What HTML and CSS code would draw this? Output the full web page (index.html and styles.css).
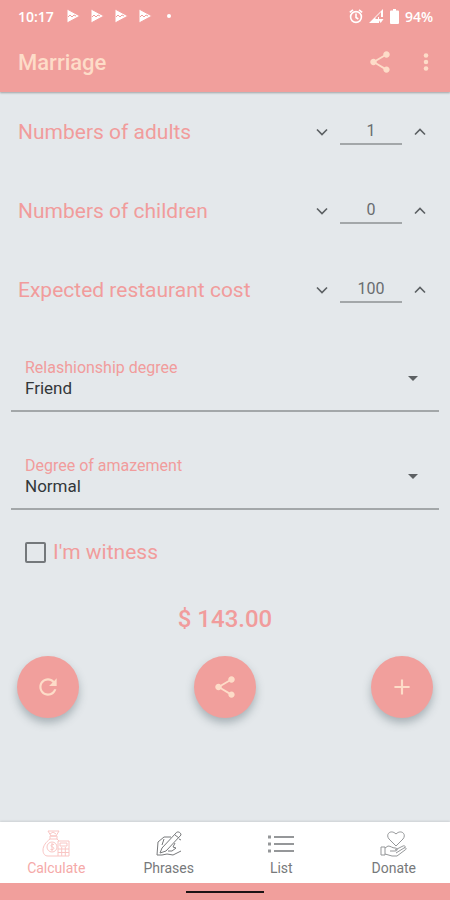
FILE: index.html
```
<!DOCTYPE html>
<html lang="en">

<head>
    <meta charset="UTF-8">
    <meta name="viewport" content="width=device-width, initial-scale=1.0">
    <title>Marriage</title>
    <link rel="stylesheet" href="styles.css">
</head>

<body>
    <header class="app-header">
        <div class="status-bar">
            <span class="clock">10:17</span>
            <div class="notifications">
                <svg class="play-icon" viewBox="0 0 14 14"><path d="M1 0l13 7-13 7z" fill="#fff" /><path d="M2 8l2-2 2 2 2-2 2 1" /></svg>
                <svg class="play-icon" viewBox="0 0 14 14"><path d="M1 0l13 7-13 7z" fill="#fff" /><path d="M2 8l2-2 2 2 2-2 2 1" /></svg>
                <svg class="play-icon" viewBox="0 0 14 14"><path d="M1 0l13 7-13 7z" fill="#fff" /><path d="M2 8l2-2 2 2 2-2 2 1" /></svg>
                <svg class="play-icon" viewBox="0 0 14 14"><path d="M1 0l13 7-13 7z" fill="#fff" /><path d="M2 8l2-2 2 2 2-2 2 1" /></svg>
                <span class="more-dot"></span>
            </div>
            <div class="system-icons">
                <svg width="14" height="15" viewBox="0 0 14 15" fill="none" stroke="#fff" stroke-width="1.6">
                    <circle cx="7" cy="8" r="5.4" />
                    <path d="M7 4.500v4l2.300 1.500M.8 3.300L4 .8M13.200 3.300L10 .8" />
                </svg>
                <svg width="15" height="15" viewBox="0 0 15 15">
                    <path d="M0 14L14 0v8h-4v6z" fill="#fff" />
                    <path d="M6.500 10V8.500L12 3v5H9v2z" fill="#f19f9c" />
                    <path d="M9 10h5.500L11.700 14z" fill="#fff" />
                </svg>
                <svg width="9" height="15" viewBox="0 0 9 15">
                    <path d="M3 0h3v1.500h2a1 1 0 0 1 1 1V14a1 1 0 0 1-1 1H1a1 1 0 0 1-1-1V2.500a1 1 0 0 1 1-1h2z" fill="#fff" />
                </svg>
                <span class="battery-level">94%</span>
            </div>
        </div>
        <div class="toolbar">
            <h1>Marriage</h1>
            <button class="icon-button" type="button" aria-label="Share">
                <svg width="26" height="26" viewBox="0 0 24 24" fill="currentColor">
                    <path d="M18 16.080c-.76 0-1.440.3-1.960.77L8.910 12.700c.05-.23.09-.46.09-.7s-.04-.47-.09-.7l7.050-4.110c.54.5 1.250.81 2.040.81 1.660 0 3-1.340 3-3s-1.340-3-3-3-3 1.340-3 3c0 .24.04.47.09.7L8.040 9.810C7.500 9.310 6.790 9 6 9c-1.660 0-3 1.340-3 3s1.340 3 3 3c.79 0 1.500-.31 2.040-.81l7.120 4.160c-.05.21-.08.43-.08.65 0 1.610 1.310 2.920 2.920 2.920s2.920-1.310 2.920-2.920-1.310-2.920-2.920-2.920z" />
                </svg>
            </button>
            <button class="icon-button" type="button" aria-label="More options">
                <svg width="26" height="26" viewBox="0 0 24 24" fill="currentColor">
                    <circle cx="12" cy="6" r="2.100" />
                    <circle cx="12" cy="12" r="2.100" />
                    <circle cx="12" cy="18" r="2.100" />
                </svg>
            </button>
        </div>
    </header>

    <main class="content">
        <div class="number-row">
            <label for="adults">Numbers of adults</label>
            <div class="stepper">
                <button type="button" aria-label="Fewer adults"><svg viewBox="0 0 24 24"><path d="M6 9l6 6 6-6" /></svg></button>
                <input type="text" inputmode="numeric" id="adults" value="1">
                <button type="button" aria-label="More adults"><svg viewBox="0 0 24 24"><path d="M6 15l6-6 6 6" /></svg></button>
            </div>
        </div>
        <div class="number-row">
            <label for="children">Numbers of children</label>
            <div class="stepper">
                <button type="button" aria-label="Fewer children"><svg viewBox="0 0 24 24"><path d="M6 9l6 6 6-6" /></svg></button>
                <input type="text" inputmode="numeric" id="children" value="0">
                <button type="button" aria-label="More children"><svg viewBox="0 0 24 24"><path d="M6 15l6-6 6 6" /></svg></button>
            </div>
        </div>
        <div class="number-row">
            <label for="cost">Expected restaurant cost</label>
            <div class="stepper">
                <button type="button" aria-label="Lower cost"><svg viewBox="0 0 24 24"><path d="M6 9l6 6 6-6" /></svg></button>
                <input type="text" inputmode="numeric" id="cost" value="100">
                <button type="button" aria-label="Higher cost"><svg viewBox="0 0 24 24"><path d="M6 15l6-6 6 6" /></svg></button>
            </div>
        </div>

        <div class="select-list">
            <div class="select-field">
                <label for="relationship">Relashionship degree</label>
                <select id="relationship">
                    <option>Friend</option>
                </select>
                <svg class="select-arrow" width="10" height="5" viewBox="0 0 10 5"><path d="M0 0h10L5 5z" fill="#5c6063" /></svg>
            </div>
            <div class="select-field">
                <label for="amazement">Degree of amazement</label>
                <select id="amazement">
                    <option>Normal</option>
                </select>
                <svg class="select-arrow" width="10" height="5" viewBox="0 0 10 5"><path d="M0 0h10L5 5z" fill="#5c6063" /></svg>
            </div>
        </div>

        <label class="witness">
            <input type="checkbox">
            I'm witness
        </label>

        <p class="total">$ 143.00</p>

        <div class="actions">
            <button class="fab" type="button" aria-label="Reset">
                <svg width="26" height="26" viewBox="0 0 24 24" fill="currentColor">
                    <path d="M17.650 6.350C16.200 4.900 14.210 4 12 4c-4.420 0-7.990 3.580-7.990 8s3.570 8 7.990 8c3.730 0 6.840-2.550 7.730-6h-2.080c-.82 2.330-3.040 4-5.650 4-3.310 0-6-2.690-6-6s2.690-6 6-6c1.660 0 3.140.69 4.220 1.780L13 11h7V4l-2.350 2.350z" />
                </svg>
            </button>
            <button class="fab" type="button" aria-label="Share result">
                <svg width="26" height="26" viewBox="0 0 24 24" fill="currentColor">
                    <path d="M18 16.080c-.76 0-1.440.3-1.960.77L8.910 12.700c.05-.23.09-.46.09-.7s-.04-.47-.09-.7l7.050-4.110c.54.5 1.250.81 2.040.81 1.660 0 3-1.340 3-3s-1.340-3-3-3-3 1.340-3 3c0 .24.04.47.09.7L8.040 9.810C7.500 9.310 6.790 9 6 9c-1.660 0-3 1.340-3 3s1.340 3 3 3c.79 0 1.500-.31 2.040-.81l7.120 4.160c-.05.21-.08.43-.08.65 0 1.610 1.310 2.920 2.920 2.920s2.920-1.310 2.920-2.920-1.310-2.920-2.920-2.920z" />
                </svg>
            </button>
            <button class="fab" type="button" aria-label="Add">
                <svg width="26" height="26" viewBox="0 0 24 24" fill="currentColor">
                    <path d="M19 13h-6v6h-2v-6H5v-2h6V5h2v6h6v2z" />
                </svg>
            </button>
        </div>
    </main>

    <nav class="bottom-nav">
        <a class="active" href="#calculate">
            <svg viewBox="0 0 28 28">
                <path d="M6 1h11l-3 5H9zM8 6h7v3H8zM8 9C4 12 1 16 1 20c0 4 2 6 5 6h10M15 9l2 2M8 4l3-2 3 2" />
                <circle cx="10" cy="17" r="5" />
                <path d="M12 14.500c-3-1-4 2-1.500 2.500s1.500 3.500-2 2.500M10 13v8M16 11h11v15H16zM18 13h7v3h-7zM16 19h11M16 22.500h11M19.700 17v9M23.300 17v9" />
            </svg>
            Calculate
        </a>
        <a href="#phrases">
            <svg class="pen-icon" viewBox="0 0 28 28">
                <path d="M7 18L21 3c1-2 5-1 5 2L11 21l-6 2zM20 5l4 3" />
                <path d="M16 7H9l-6 5-1 13h5l5-1 6 1 8-4M9 9l-2 6M24 9l2 1M20 13l-2 4 3 1-4 3h-4" />
            </svg>
            Phrases
        </a>
        <a href="#list">
            <svg viewBox="0 0 28 28">
                <path class="list-lines" d="M7 7h20M7 14h20M7 21h20" />
                <path class="list-dots" d="M1 7h3M1 14h3M1 21h3" />
            </svg>
            List
        </a>
        <a href="#donate">
            <svg viewBox="0 0 28 28">
                <path d="M16 16L9 9C5 4 11-1 16 4c5-5 11 0 7 5z" />
                <path d="M1 17h4v8H1zM5 18l3-2c3 0 4 2 7 2 3 0 3 3 0 3h-5M15 20l8-4c2-1 3 1 1 2l-8 5M24 18c2-1 3 1 1 2l-8 6h-5l-7-2" />
            </svg>
            Donate
        </a>
    </nav>
    <footer class="gesture-bar"><span></span></footer>
</body>

</html>
```
FILE: styles.css
```
:root {
    --primary: #f19f9c;
    --on-primary: #fddcc8;
    --background: #e4e8eb;
    --label: #f19c9c;
    --text: #33373a;
    --line: #a3a7a9;
}

* {
    margin: 0;
    padding: 0;
    box-sizing: border-box;
    font-family: Roboto, "Liberation Sans", sans-serif;
}

body {
    display: flex;
    flex-direction: column;
    min-height: 100vh;
    background: var(--background);
    color: var(--text);
}

button {
    border: none;
    background: none;
    cursor: pointer;
}

svg {
    display: block;
}

.app-header {
    background: var(--primary);
    box-shadow: 0 1px 2px rgba(0, 0, 0, 0.3);
}

.status-bar {
    display: flex;
    align-items: center;
    height: 32px;
    padding: 0 17px 0 18px;
    color: #fff;
}

.clock,
.battery-level {
    font-family: "Open Sans", Roboto, sans-serif;
    font-size: 14px;
    font-weight: 600;
}

.notifications {
    display: flex;
    align-items: center;
    gap: 10px;
    margin-left: 12px;
}

.play-icon {
    width: 14px;
    height: 14px;
    fill: none;
    stroke: var(--primary);
}

.more-dot {
    width: 4px;
    height: 4px;
    margin-left: 5px;
    border-radius: 50%;
    background: #fff;
}

.system-icons {
    display: flex;
    align-items: center;
    gap: 6px;
    margin-left: auto;
}

.toolbar {
    display: flex;
    align-items: center;
    height: 60px;
    padding: 0 11px 0 18px;
    color: var(--on-primary);
}

.toolbar h1 {
    flex: 1;
    font-size: 22px;
    font-weight: 500;
}

.icon-button {
    color: inherit;
    margin-left: 20px;
}

.content {
    flex: 1;
}

.number-row {
    display: flex;
    align-items: center;
    justify-content: space-between;
    height: 79px;
    padding: 0 18px;
}

.number-row label {
    color: var(--label);
    font-size: 21px;
}

.stepper {
    display: flex;
    align-items: center;
    gap: 8px;
    padding: 0 2px;
}

.stepper svg {
    width: 20px;
    height: 20px;
    fill: none;
    stroke: #5c6063;
    stroke-width: 2;
}

.stepper input {
    width: 62px;
    height: 26px;
    border: none;
    border-bottom: 2px solid var(--line);
    background: none;
    color: #696d70;
    font-size: 16px;
    text-align: center;
}

.select-list {
    display: grid;
    gap: 44px;
    padding: 29px 11px 0;
}

.select-field {
    position: relative;
    border-bottom: 2px solid var(--line);
}

.select-field label {
    display: block;
    padding-left: 14px;
    color: var(--label);
    font-size: 16px;
    line-height: 20px;
}

.select-field select {
    display: block;
    width: 100%;
    height: 32px;
    padding: 0 14px 12px;
    border: none;
    appearance: none;
    background: none;
    color: var(--text);
    font-size: 17px;
    line-height: 20px;
}

.select-arrow {
    position: absolute;
    top: 18px;
    right: 21px;
    pointer-events: none;
}

.witness {
    display: flex;
    align-items: center;
    gap: 7px;
    height: 28px;
    margin: 28px 25px 0;
    color: var(--label);
    font-size: 21px;
}

.witness input {
    width: 21px;
    height: 21px;
    border: 2px solid #74787b;
    border-radius: 2px;
    appearance: none;
}

.witness input:checked {
    background: var(--primary);
}

.total {
    margin-top: 39px;
    color: var(--label);
    font-size: 24px;
    font-weight: 500;
    line-height: 28px;
    text-align: center;
}

.actions {
    display: flex;
    justify-content: space-between;
    padding: 23px 17px 32px;
}

.fab {
    display: flex;
    align-items: center;
    justify-content: center;
    width: 62px;
    height: 62px;
    border-radius: 50%;
    background: var(--primary);
    color: var(--on-primary);
    box-shadow: 0 5px 9px rgba(60, 80, 90, 0.35);
}

.bottom-nav {
    display: grid;
    grid-template-columns: repeat(4, 1fr);
    height: 61px;
    background: #fff;
    box-shadow: 0 -1px 2px rgba(0, 0, 0, 0.1);
}

.bottom-nav a {
    display: flex;
    flex-direction: column;
    align-items: center;
    gap: 2px;
    padding-top: 8px;
    color: #77797b;
    font-size: 14px;
    line-height: 16px;
    text-decoration: none;
}

.bottom-nav a.active {
    color: #f5a9a8;
}

.bottom-nav svg {
    width: 28px;
    height: 28px;
    fill: none;
    stroke: #959799;
    stroke-width: 1;
}

.bottom-nav .active svg {
    stroke: #f9c6c4;
}

.bottom-nav .pen-icon {
    stroke: #77797b;
}

.bottom-nav .list-lines {
    stroke-width: 2;
}

.bottom-nav .list-dots {
    stroke-width: 3;
}

.gesture-bar {
    display: flex;
    justify-content: center;
    height: 17px;
    padding-top: 8px;
    background: var(--primary);
}

.gesture-bar span {
    width: 78px;
    height: 2px;
    background: #1c1414;
}
```
